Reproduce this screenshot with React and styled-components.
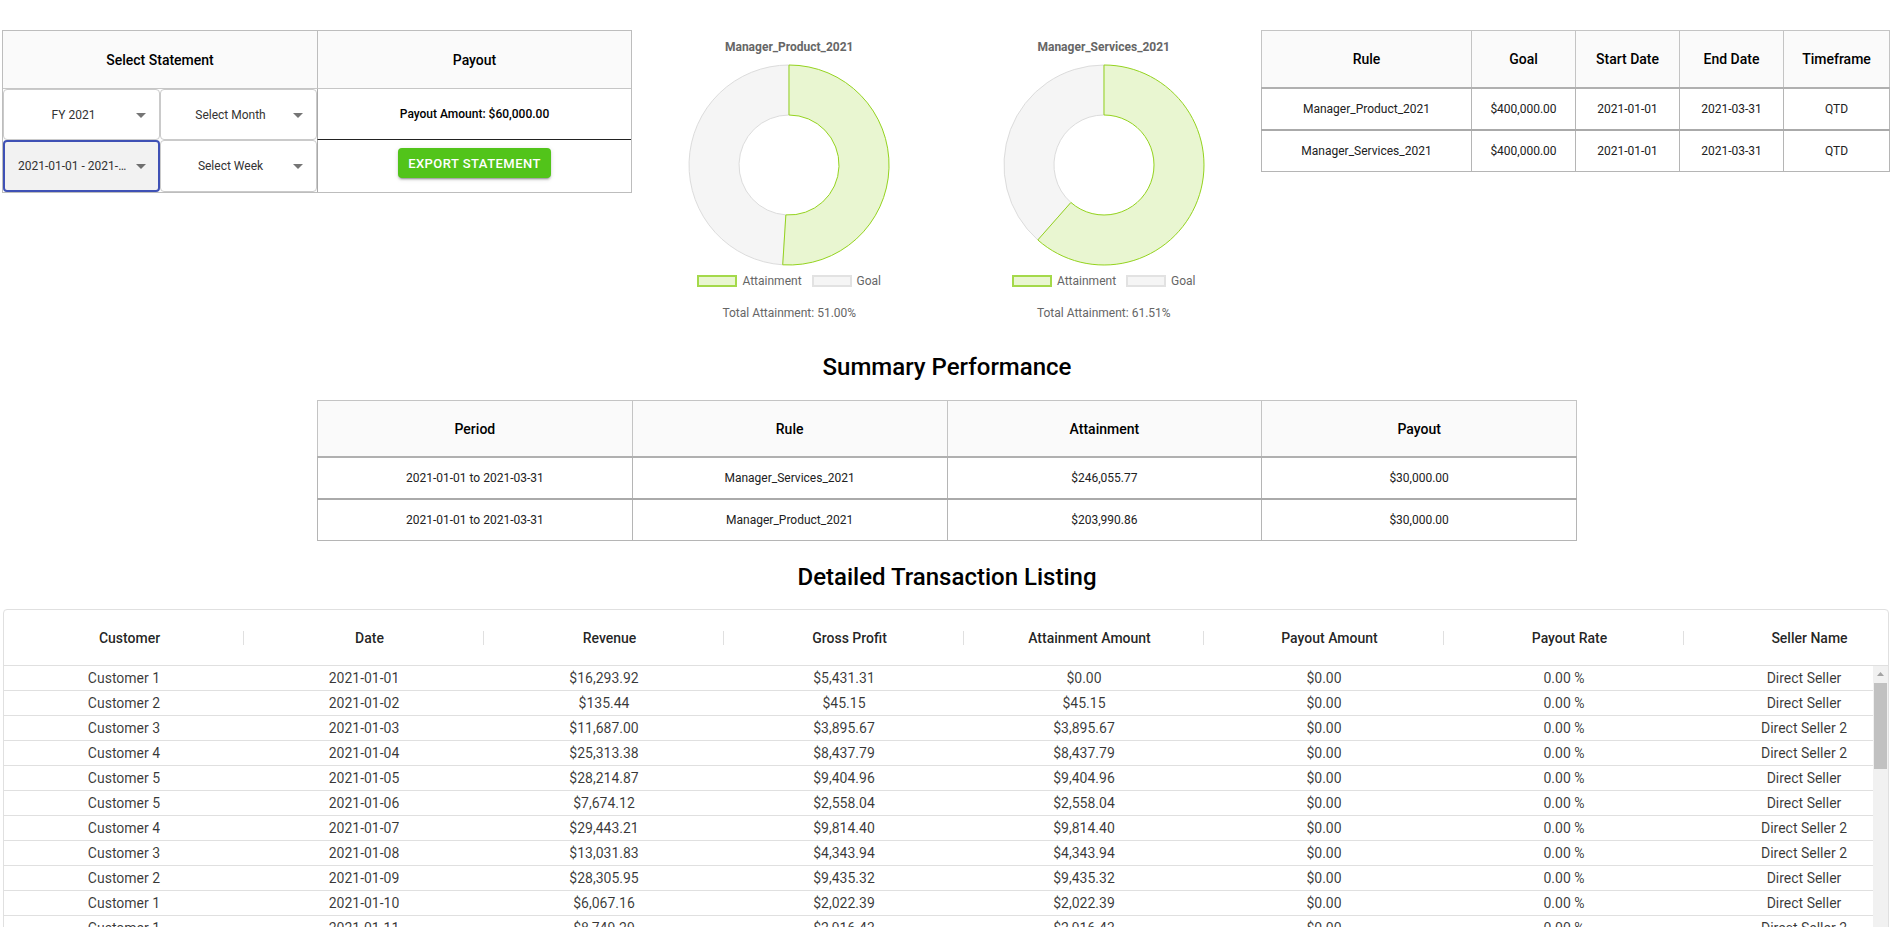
import React from "react";
import styled, { createGlobalStyle } from "styled-components";

const GlobalStyle = createGlobalStyle`
    html, body {
        margin: 0;
        padding: 0;
        background: #fff;
        overflow: hidden;
        font-family: Roboto, "Liberation Sans", sans-serif;
    }
`

const Page = styled.div`
    width: 1894px;
    color: #000;
`

const TopSection = styled.div`
    display: flex;
    align-items: flex-start;
    padding-top: 30px;
`

/* ---------- statement selector ---------- */

const StatementTable = styled.div`
    margin-left: 2px;
    width: 630px;
    box-sizing: border-box;
    display: grid;
    grid-template-columns: 157px 157px 1fr;
    grid-template-rows: 58px 51px 52px;
    border: 1px solid #bdbdbd;
`

const HeadCell = styled.div`
    grid-column: span ${props => props.$span || 1};
    display: flex;
    align-items: center;
    justify-content: center;
    background: #fafafa;
    font-size: 14px;
    font-weight: 500;
    border-bottom: 1px solid #c6c6c6;
    border-left: ${props => props.$divider ? "1px solid #bdbdbd" : "none"};
`

const SelectBox = styled.div`
    box-sizing: border-box;
    display: flex;
    align-items: center;
    padding-left: ${props => props.$focused ? "13px" : "14px"};
    border: ${props => props.$focused ? "2px solid #3f51b5" : "1px solid #cacaca"};
    border-radius: 4px;
    background: ${props => props.$focused ? "#f2f2f2" : "#fff"};
    font-size: 12px;
    color: #333;
    min-width: 0;
`

const SelectText = styled.span`
    flex: 1;
    min-width: 0;
    text-align: center;
    white-space: nowrap;
    overflow: hidden;
    text-overflow: ellipsis;
`

const SelectArrow = styled.svg`
    width: 24px;
    height: 24px;
    flex-shrink: 0;
    margin-right: ${props => props.$focused ? "5px" : "6px"};
    fill: rgba(0, 0, 0, 0.54);
`

const PayoutCell = styled.div`
    grid-column: 3;
    display: flex;
    justify-content: center;
    align-items: ${props => props.$top ? "flex-start" : "center"};
    border-left: 1px solid #a9a9a9;
    border-bottom: ${props => props.$divider ? "1px solid #222" : "none"};
    font-size: 12px;
    font-weight: 500;
`

const ExportButton = styled.button`
    margin-top: 8px;
    height: 30px;
    padding: 4px 10px;
    border: none;
    border-radius: 4px;
    background: #52c41a;
    color: #fff;
    font-family: Roboto, "Liberation Sans", sans-serif;
    font-size: 13px;
    font-weight: 500;
    letter-spacing: 0.46px;
    text-transform: uppercase;
    box-shadow: 0px 3px 1px -2px rgba(0,0,0,0.2), 0px 2px 2px 0px rgba(0,0,0,0.14), 0px 1px 5px 0px rgba(0,0,0,0.12);
`

/* ---------- charts ---------- */

const ChartsRow = styled.div`
    width: 629px;
    display: flex;
`

const ChartCard = styled.div`
    flex: 1;
    display: flex;
    flex-direction: column;
    align-items: center;
`

const ChartTitle = styled.div`
    margin-top: 10px;
    font-size: 12px;
    line-height: 14px;
    font-weight: bold;
    color: #666;
`

const Donut = styled.svg`
    margin-top: 10px;
    display: block;
`

const Legend = styled.div`
    margin-top: 9px;
    display: flex;
    align-items: center;
    gap: 10px;
`

const LegendItem = styled.div`
    display: flex;
    align-items: center;
    gap: 5px;
    font-size: 12px;
    line-height: 12px;
    color: #666;
`

const Swatch = styled.span`
    width: 40px;
    height: 12px;
    box-sizing: border-box;
    border: 2px solid ${props => props.$border};
    background: ${props => props.$fill};
`

const TotalText = styled.div`
    margin-top: 19px;
    font-size: 12px;
    line-height: 14px;
    color: #666;
`

/* ---------- plain tables ---------- */

const InfoTable = styled.table`
    width: ${props => props.$width}px;
    margin: ${props => props.$margin || "0"};
    border-collapse: collapse;
    table-layout: fixed;
    border: 1px solid #bdbdbd;
`

const Th = styled.th`
    height: ${props => props.$h || 56}px;
    padding: 0;
    background: #fafafa;
    font-size: 14px;
    font-weight: 500;
    border: 1px solid #c4c4c4;
    border-bottom: 2px solid #b0b0b0;
`

const Td = styled.td`
    height: 40px;
    padding: 0;
    text-align: center;
    font-size: 12px;
    color: #212121;
    border: 1px solid #b5b5b5;
    border-top: 2px solid #aaa;
`

const SectionHeading = styled.h2`
    margin: ${props => props.$top}px 0 0;
    text-align: center;
    font-size: 24px;
    line-height: 28px;
    font-weight: 500;
`

/* ---------- data grid ---------- */

const Grid = styled.div`
    margin: 18px 5px 0 3px;
    border: 1px solid #e0e0e0;
    border-radius: 4px;
    overflow: hidden;
`

const GridHeader = styled.div`
    height: 55px;
    border-bottom: 1px solid #e0e0e0;
    overflow: hidden;
`

const GridRow = styled.div`
    display: grid;
    grid-template-columns: repeat(8, 240px);
    height: ${props => props.$header ? "55px" : "25px"};
    box-sizing: border-box;
    border-bottom: ${props => props.$header ? "none" : "1px solid #e0e0e0"};
`

const ColHead = styled.div`
    display: flex;
    align-items: center;
    padding-left: 12px;
    font-size: 14px;
    font-weight: 500;
    color: rgba(0, 0, 0, 0.87);
`

const ColTitle = styled.span`
    flex: 1;
    text-align: center;
`

const ColSep = styled.span`
    width: 1px;
    height: 14px;
    background: ${props => props.$hidden ? "transparent" : "#e0e0e0"};
`

const GridBody = styled.div`
    display: flex;
    height: 300px;
`

const RowsViewport = styled.div`
    flex: 1;
    min-width: 0;
    overflow: hidden;
`

const Cell = styled.div`
    text-align: center;
    white-space: nowrap;
    font-size: 14px;
    line-height: 24px;
    color: rgba(0, 0, 0, 0.78);
`

const ScrollTrack = styled.div`
    width: 15px;
    background: #f1f1f1;
    display: flex;
    flex-direction: column;
    align-items: center;
`

const ScrollButton = styled.div`
    height: 15px;
    display: flex;
    align-items: center;
    justify-content: center;
`

const ScrollThumb = styled.div`
    margin-top: 2px;
    width: 13px;
    height: 86px;
    background: #c1c1c1;
`

/* ---------- data ---------- */

const rules = [
    ["Manager_Product_2021", "$400,000.00", "2021-01-01", "2021-03-31", "QTD"],
    ["Manager_Services_2021", "$400,000.00", "2021-01-01", "2021-03-31", "QTD"],
]

const summary = [
    ["2021-01-01 to 2021-03-31", "Manager_Services_2021", "$246,055.77", "$30,000.00"],
    ["2021-01-01 to 2021-03-31", "Manager_Product_2021", "$203,990.86", "$30,000.00"],
]

const columns = ["Customer", "Date", "Revenue", "Gross Profit", "Attainment Amount", "Payout Amount", "Payout Rate", "Seller Name"]

const transactions = [
    ["Customer 1", "2021-01-01", "$16,293.92", "$5,431.31", "$0.00", "Direct Seller"],
    ["Customer 2", "2021-01-02", "$135.44", "$45.15", "$45.15", "Direct Seller"],
    ["Customer 3", "2021-01-03", "$11,687.00", "$3,895.67", "$3,895.67", "Direct Seller 2"],
    ["Customer 4", "2021-01-04", "$25,313.38", "$8,437.79", "$8,437.79", "Direct Seller 2"],
    ["Customer 5", "2021-01-05", "$28,214.87", "$9,404.96", "$9,404.96", "Direct Seller"],
    ["Customer 5", "2021-01-06", "$7,674.12", "$2,558.04", "$2,558.04", "Direct Seller"],
    ["Customer 4", "2021-01-07", "$29,443.21", "$9,814.40", "$9,814.40", "Direct Seller 2"],
    ["Customer 3", "2021-01-08", "$13,031.83", "$4,343.94", "$4,343.94", "Direct Seller 2"],
    ["Customer 2", "2021-01-09", "$28,305.95", "$9,435.32", "$9,435.32", "Direct Seller"],
    ["Customer 1", "2021-01-10", "$6,067.16", "$2,022.39", "$2,022.39", "Direct Seller"],
    ["Customer 1", "2021-01-11", "$8,749.29", "$2,916.43", "$2,916.43", "Direct Seller 2"],
    ["Customer 2", "2021-01-12", "$19,402.55", "$6,467.52", "$6,467.52", "Direct Seller 2"],
    ["Customer 3", "2021-01-13", "$4,118.70", "$1,372.90", "$1,372.90", "Direct Seller"],
]

const charts = [
    { name: "Manager_Product_2021", pct: 0.51, label: "51.00%" },
    { name: "Manager_Services_2021", pct: 0.6151, label: "61.51%" },
]

/* ---------- pieces ---------- */

const point = (r, frac) => {
    const a = frac * Math.PI * 2 - Math.PI / 2
    return [(r * Math.cos(a)).toFixed(2), (r * Math.sin(a)).toFixed(2)]
}

const arc = (from, to, ro, ri) => {
    const large = to - from > 0.5 ? 1 : 0
    const [x1, y1] = point(ro, from)
    const [x2, y2] = point(ro, to)
    const [x3, y3] = point(ri, to)
    const [x4, y4] = point(ri, from)
    return `M${x1} ${y1} A${ro} ${ro} 0 ${large} 1 ${x2} ${y2} L${x3} ${y3} A${ri} ${ri} 0 ${large} 0 ${x4} ${y4} Z`
}

const Chart = ({ name, pct, label }) => (
    <ChartCard>
        <ChartTitle>{name}</ChartTitle>
        <Donut width="202" height="202" viewBox="-101 -101 202 202">
            <path d={arc(pct, 1, 100, 50)} fill="#f5f5f5" stroke="#dcdcdc" strokeWidth="1" />
            <path d={arc(0, pct, 100, 50)} fill="#e9f6d1" stroke="#94d31e" strokeWidth="1" />
        </Donut>
        <Legend>
            <LegendItem>
                <Swatch $fill="#e9f6d1" $border="#a4d94a" />
                Attainment
            </LegendItem>
            <LegendItem>
                <Swatch $fill="#f5f5f5" $border="#e2e2e2" />
                Goal
            </LegendItem>
        </Legend>
        <TotalText>Total Attainment: {label}</TotalText>
    </ChartCard>
)

const Select = ({ value, focused }) => (
    <SelectBox $focused={focused}>
        <SelectText>{value}</SelectText>
        <SelectArrow $focused={focused} viewBox="0 0 24 24">
            <path d="M7 10l5 5 5-5z" />
        </SelectArrow>
    </SelectBox>
)

const App = () => {
    return (
        <Page>
            <GlobalStyle />
            <TopSection>
                <StatementTable>
                    <HeadCell $span={2}>Select Statement</HeadCell>
                    <HeadCell $divider>Payout</HeadCell>
                    <Select value="FY 2021" />
                    <Select value="Select Month" />
                    <PayoutCell $divider>Payout Amount: $60,000.00</PayoutCell>
                    <Select value="2021-01-01 - 2021-03-31" focused />
                    <Select value="Select Week" />
                    <PayoutCell $top>
                        <ExportButton>Export Statement</ExportButton>
                    </PayoutCell>
                </StatementTable>

                <ChartsRow>
                    {charts.map(c => <Chart key={c.name} {...c} />)}
                </ChartsRow>

                <InfoTable $width={629}>
                    <colgroup>
                        <col style={{ width: 210 }} />
                        <col style={{ width: 104 }} />
                        <col style={{ width: 104 }} />
                        <col style={{ width: 104 }} />
                        <col />
                    </colgroup>
                    <thead>
                        <tr>
                            <Th>Rule</Th>
                            <Th>Goal</Th>
                            <Th>Start Date</Th>
                            <Th>End Date</Th>
                            <Th>Timeframe</Th>
                        </tr>
                    </thead>
                    <tbody>
                        {rules.map(r => (
                            <tr key={r[0]}>
                                {r.map((v, i) => <Td key={i}>{v}</Td>)}
                            </tr>
                        ))}
                    </tbody>
                </InfoTable>
            </TopSection>

            <SectionHeading $top={33}>Summary Performance</SectionHeading>
            <InfoTable $width={1260} $margin="19px 0 0 317px">
                <thead>
                    <tr>
                        <Th $h={55}>Period</Th>
                        <Th $h={55}>Rule</Th>
                        <Th $h={55}>Attainment</Th>
                        <Th $h={55}>Payout</Th>
                    </tr>
                </thead>
                <tbody>
                    {summary.map((r, idx) => (
                        <tr key={idx}>
                            {r.map((v, i) => <Td key={i}>{v}</Td>)}
                        </tr>
                    ))}
                </tbody>
            </InfoTable>

            <SectionHeading $top={22}>Detailed Transaction Listing</SectionHeading>
            <Grid>
                <GridHeader>
                    <GridRow $header>
                        {columns.map((c, i) => (
                            <ColHead key={c}>
                                <ColTitle>{c}</ColTitle>
                                <ColSep $hidden={i === columns.length - 1} />
                            </ColHead>
                        ))}
                    </GridRow>
                </GridHeader>
                <GridBody>
                    <RowsViewport>
                        {transactions.map((t, idx) => (
                            <GridRow key={idx}>
                                <Cell>{t[0]}</Cell>
                                <Cell>{t[1]}</Cell>
                                <Cell>{t[2]}</Cell>
                                <Cell>{t[3]}</Cell>
                                <Cell>{t[4]}</Cell>
                                <Cell>$0.00</Cell>
                                <Cell>0.00 %</Cell>
                                <Cell>{t[5]}</Cell>
                            </GridRow>
                        ))}
                    </RowsViewport>
                    <ScrollTrack>
                        <ScrollButton>
                            <svg width="7" height="4" viewBox="0 0 7 4">
                                <polygon points="3.5,0 7,4 0,4" fill="#a3a3a3" />
                            </svg>
                        </ScrollButton>
                        <ScrollThumb />
                    </ScrollTrack>
                </GridBody>
            </Grid>
        </Page>
    )
}

export default App;
